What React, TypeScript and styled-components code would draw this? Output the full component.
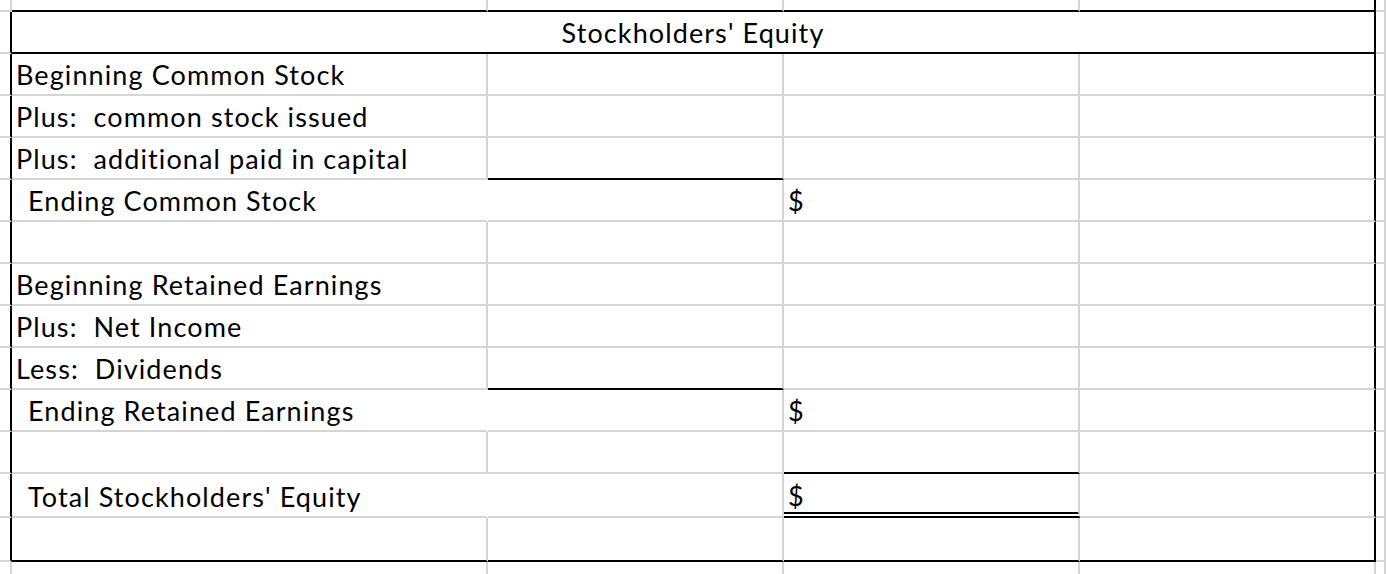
import styled, { createGlobalStyle, css } from "styled-components";

const GlobalStyle = createGlobalStyle`
  html, body {
    margin: 0;
    padding: 0;
    background: #ffffff;
    overflow: hidden;
  }
`;

const GRID = "#d4d4d4";
const INK = "#000000";

type Row = {
  label?: string;
  indent?: boolean;
  spans?: boolean;
  underlineB?: boolean;
  dollar?: boolean;
  underlineC?: "single" | "double";
};

const rows: Row[] = [
  { label: "Beginning Common Stock" },
  { label: "Plus:  common stock issued" },
  { label: "Plus:  additional paid in capital", underlineB: true },
  { label: "Ending Common Stock", indent: true, spans: true, dollar: true },
  {},
  { label: "Beginning Retained Earnings" },
  { label: "Plus:  Net Income" },
  { label: "Less:  Dividends", underlineB: true },
  { label: "Ending Retained Earnings", indent: true, spans: true, dollar: true },
  { underlineC: "single" },
  {
    label: "Total Stockholders' Equity",
    indent: true,
    spans: true,
    dollar: true,
    underlineC: "double",
  },
  {},
];

const Sheet = styled.div`
  display: grid;
  grid-template-columns: 12px 476px 296px 296px 296px 10px;
  grid-template-rows: 12px repeat(11, 42px) 44px 44px 12px;
  width: 1386px;
  height: 574px;
  overflow: hidden;
  font-family: "Lato", "Noto Sans", sans-serif;
  font-size: 27px;
  letter-spacing: 1.1px;
  color: ${INK};
`;

const Cell = styled.div<{
  $right?: "grid" | "ink" | "none";
  $bottom?: "grid" | "ink" | "double" | "none";
  $indent?: boolean;
}>`
  box-sizing: border-box;
  display: flex;
  align-items: flex-end;
  padding: 0 0 6px ${(p) => (p.$indent ? "16px" : "4px")};
  line-height: 27px;
  white-space: pre;
  min-width: 0;
  border-right: ${(p) =>
    p.$right === "none"
      ? "2px solid transparent"
      : `2px solid ${p.$right === "ink" ? INK : GRID}`};
  border-bottom: ${(p) =>
    p.$bottom === "none"
      ? "0"
      : p.$bottom === "double"
      ? `6px double ${INK}`
      : `2px solid ${p.$bottom === "ink" ? INK : GRID}`};
  ${(p) => p.$bottom === "double" && css`padding-bottom: 3px;`}
`;

const Title = styled(Cell)`
  grid-column: span 4;
  justify-content: center;
  padding-left: 0;
`;

export default function App() {
  return (
    <>
      <GlobalStyle />
      <Sheet>
        {/* row above the frame */}
        <Cell />
        <Cell $bottom="ink" />
        <Cell $bottom="ink" />
        <Cell $bottom="ink" />
        <Cell $bottom="ink" $right="ink" />
        <Cell />

        {/* merged title */}
        <Cell $right="ink" />
        <Title $right="ink" $bottom="ink">
          Stockholders' Equity
        </Title>
        <Cell />

        {rows.map((r, i) => {
          const frameBottom = i === rows.length - 1 ? "ink" : "grid";
          return [
            <Cell key={`e${i}`} $right="ink" />,
            <Cell
              key={`a${i}`}
              $indent={r.indent}
              $right={r.spans ? "none" : "grid"}
              $bottom={frameBottom}
            >
              {r.label}
            </Cell>,
            <Cell key={`b${i}`} $bottom={r.underlineB ? "ink" : frameBottom} />,
            <Cell
              key={`c${i}`}
              $bottom={
                r.underlineC === "single"
                  ? "ink"
                  : r.underlineC === "double"
                  ? "double"
                  : frameBottom
              }
            >
              {r.dollar && "$"}
            </Cell>,
            <Cell key={`d${i}`} $right="ink" $bottom={frameBottom} />,
            <Cell key={`f${i}`} />,
          ];
        })}

        {/* row below the frame */}
        <Cell $bottom="none" />
        <Cell $bottom="none" />
        <Cell $bottom="none" />
        <Cell $bottom="none" />
        <Cell $bottom="none" />
        <Cell $bottom="none" />
      </Sheet>
    </>
  );
}
